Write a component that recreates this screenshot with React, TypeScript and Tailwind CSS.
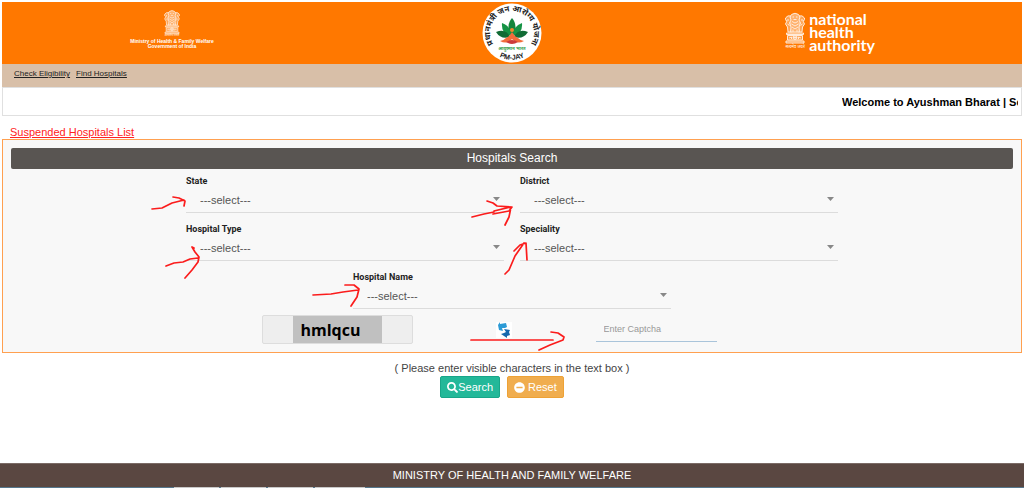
import React from 'react';
import { FaSearch, FaMinusCircle } from 'react-icons/fa';

interface SelectFieldProps {
  id: string;
  label: string;
}

const SelectField: React.FC<SelectFieldProps> = ({ id, label }) => (
  <div className="px-2 h-12">
    <label htmlFor={id} className="block pt-1 text-[9px] leading-4 font-bold font-['Roboto',sans-serif] text-[#222]">
      {label}
    </label>
    <div className="relative">
      <select
        id={id}
        className="block w-full h-6 appearance-none bg-transparent border-b border-[#dcdcdc] pl-3.5 pb-0.5 text-[11px] leading-4 text-[#555] outline-none"
      >
        <option>---select---</option>
      </select>
      <svg className="absolute right-1 top-2 w-[7px] h-1 pointer-events-none" viewBox="0 0 7 4">
        <path d="M0 0h7L3.5 4z" fill="#888" />
      </svg>
    </div>
  </div>
);

// Lion capital of Ashoka
const Emblem: React.FC<{ className: string }> = ({ className }) => (
  <svg className={className} viewBox="2 0 40 62" fill="none" stroke="#fff" strokeWidth="2" opacity="0.85">
    <path d="M15 4q7-5 14 0l3 5-2 6 3 6-3 8 1 10H13l1-10-3-8 3-6-2-6z" fill="#fff" fillOpacity="0.5" />
    <path d="M14 7Q7 5 4 10l-2 4 4 3-3 6 4 6 1 10h7M30 7q7-2 10 3l2 4-4 3 3 6-4 6-1 10h-7" fill="#fff" fillOpacity="0.4" />
    <path d="M17 9h3M24 9h3M19 14h6M16 18l6 3 6-3M15 23l7 4 7-4M16 29l6 4 6-4M18 34v5M26 34v5M8 13v4M36 13v4M7 23l4 3M37 23l-4 3" />
    <path d="M5 41h34v3H5zM7 46h30v9H7zM4 57h36v4H4z" fill="#fff" fillOpacity="0.35" />
    <circle cx="22" cy="50" r="4" />
    <path d="M22 46v8M18 50h8M10 51l5-2v4M34 51l-5-2v4" />
  </svg>
);

const PmjayLogo: React.FC = () => (
  <svg className="w-[60px] h-[60px]" viewBox="0 0 60 60" role="img" aria-label="PM-JAY">
    <defs>
      <path id="ring-top" d="M12.2 42.6A21.8 21.8 0 1 1 47.8 42.6" />
      <path id="ring-bottom" d="M5 40A27 27 0 0 0 55 40" />
    </defs>
    <circle cx="30" cy="30" r="29.5" fill="#fff" />
    <g className="font-['Noto_Sans',sans-serif]" fill="#222" textAnchor="middle">
      <text fontSize="8" fontWeight="700">
        <textPath href="#ring-top" startOffset="50%">प्रधानमंत्री जन आरोग्य योजना</textPath>
      </text>
      <text fontSize="7" fontWeight="700" className="font-['Liberation_Sans',sans-serif]">
        <textPath href="#ring-bottom" startOffset="50%">PM-JAY</textPath>
      </text>
      <text x="30" y="47" fontSize="4.5" fontWeight="700" fill="#35a04a">आयुष्मान भारत</text>
    </g>
    <path d="M30 15q-7 8 0 19q7-11 0-19" fill="#14853b" />
    <path d="M29 33Q19 31 20 20q9 3 9 13M31 33q10-2 9-13-9 3-9 13" fill="#169345" />
    <path d="M28 34q-9 3-14-5 10-4 14 5M32 34q9 3 14-5-10-4-14 5" fill="#116b35" />
    <circle cx="30" cy="27" r="2" fill="#ef8a2b" />
    <path d="M30 29q-2 4-6 6-3 3-6 3 7 4 12-2 5 6 12 2-3 0-6-3-4-2-6-6" fill="#f26b3a" />
    <path d="M24 39q6-4 12 0-6 4-12 0" fill="#cc3b3b" />
  </svg>
);

const RefreshIcon: React.FC = () => (
  <svg className="w-4 h-4 bg-white" viewBox="0 0 16 16">
    <path d="M4 0v2l6-1 1 4-2 1H6l1 3-4-1-1-5z" fill="#2d9bd6" />
    <path d="M8 7l6 1-1 2 1 3-3 1v2l-6-4 3-1 2-1z" fill="#1769ae" />
  </svg>
);

// Pen strokes drawn on top of the search form
const Annotations: React.FC = () => (
  <svg
    className="absolute inset-0 w-full h-full pointer-events-none"
    viewBox="3 140 1018 212"
    fill="none"
    stroke="#fb1c1c"
    strokeWidth="1.7"
    strokeLinecap="round"
    strokeLinejoin="round"
  >
    <path d="M152 209l10-1 6-3 4-2 12-3M173 197l6 1 6 3-1 5" />
    <path d="M166 266l8-3 9-1 7-3 8-1M194 248l-2-1 3 5 4 5-1 5-6 8-7 8" />
    <path d="M472 217l12-3 10-2M494 211l17-4-2 10-4 8M487 201l6 2 4 3 15 1-3 4-16 3" />
    <path d="M505 274l4-4 6-14 9-13M514 251l6-6 6-2 1 17" />
    <path d="M313 295l18-1 12-2 15-2M345 285l9 0 5 4-2 8-6 9" />
    <path d="M471 340H553M551 332l7 1 6 4-1 3-13 5-11 5" />
  </svg>
);

export default function App() {
  return (
    <div className="min-h-screen flex flex-col bg-white font-['Liberation_Sans',Arial,sans-serif] text-[11px] leading-4 text-[#333]">
      <div className="px-0.5 pt-0.5">
        <header className="flex justify-between h-[62px] bg-[#ff7800] text-white">
          <div className="w-1/3 flex flex-col items-center pt-2">
            <Emblem className="w-4 h-6" />
            <span className="text-[3px] leading-[3px] font-['Noto_Sans',sans-serif]">सत्यमेव जयते</span>
            <p className="pt-0.5 text-[5px] leading-[5px] font-bold text-center">
              Ministry of Health &amp; Family Welfare
              <br />
              Government of India
            </p>
          </div>
          <div className="w-1/3 flex justify-center items-center">
            <PmjayLogo />
          </div>
          <div className="w-1/3 flex justify-center pt-2.5 pr-11 gap-1">
            <div className="flex flex-col items-center">
              <Emblem className="w-5 h-8" />
              <span className="text-[4px] leading-[6px] font-['Noto_Sans',sans-serif]">सत्यमेव जयते</span>
            </div>
            <p className="text-[16px] leading-[13px] font-bold font-['Lato',sans-serif]">
              national
              <br />
              health
              <br />
              authority
            </p>
          </div>
        </header>
        <nav className="flex gap-1.5 h-[23px] px-3 pt-0.5 bg-[#d8bfa8] text-[8px] text-[#222] underline">
          <a href="#eligibility">Check Eligibility</a>
          <a href="#hospitals">Find Hospitals</a>
        </nav>
        <div className="flex h-[29px] border border-[#e0e0e0] pr-[3px] items-center">
          <p className="ml-auto w-[176px] overflow-hidden whitespace-nowrap font-bold text-black">
            Welcome to Ayushman Bharat | Search
          </p>
        </div>
        <div className="px-2 pt-2 h-[23px]">
          <a href="#suspended" className="text-[#f22] underline">Suspended Hospitals List</a>
        </div>

        <main className="relative border border-[#ffa050] bg-[#f8f8f8] px-2 py-2">
          <h1 className="h-[21px] rounded-xs bg-[#595552] text-[12px] text-white text-center leading-[21px]">Hospitals Search</h1>
          <form id="hospital-search">
            <div className="w-2/3 mx-auto grid grid-cols-2">
              <SelectField id="state" label="State" />
              <SelectField id="district" label="District" />
              <SelectField id="type" label="Hospital Type" />
              <SelectField id="speciality" label="Speciality" />
            </div>
            <div className="w-1/3 mx-auto">
              <SelectField id="name" label="Hospital Name" />
            </div>
            <div className="w-1/2 mx-auto pt-0.5 grid grid-cols-3">
              <div className="pr-4">
                <div className="flex h-[29px] rounded-xs border border-[#ddd] bg-[#eee] px-[30px]">
                  <span className="flex-1 bg-[#c0c0c0] pl-2 text-[16px] leading-7 font-bold text-black font-['Open_Sans',sans-serif]">
                    hmlqcu
                  </span>
                </div>
              </div>
              <div className="flex justify-center items-center pr-4">
                <button type="button" aria-label="Refresh captcha">
                  <RefreshIcon />
                </button>
              </div>
              <input
                aria-label="Enter Captcha"
                placeholder="Enter Captcha"
                className="w-[121px] h-[27px] px-2 pt-0.5 border-b border-[#a9c4da] bg-transparent text-[9px] placeholder:text-[#999] outline-none"
              />
            </div>
          </form>
          <Annotations />
        </main>
      </div>

      <div className="pt-[7px] text-center">
        <p className="text-[#444]">( Please enter visible characters in the text box )</p>
        <div className="flex justify-center gap-[7px] pr-5 text-white">
          <button
            type="submit"
            form="hospital-search"
            className="flex items-center h-[22px] px-1.5 rounded-xs border border-[#18a689] bg-[#23b899]"
          >
            <FaSearch />
            Search
          </button>
          <button
            type="reset"
            form="hospital-search"
            className="flex items-center gap-[3px] h-[22px] px-1.5 rounded-xs border border-[#eea236] bg-[#f0ad4e]"
          >
            <FaMinusCircle />
            Reset
          </button>
        </div>
      </div>

      <footer className="mt-auto">
        <p className="h-6 border-t border-[#7b6b66] bg-[#5a4741] text-center text-white leading-[22px]">
          MINISTRY OF HEALTH AND FAMILY WELFARE
        </p>
        <div className="h-px bg-[#55778c] flex gap-[2px] pl-[174px]">
          <span className="w-[45px] bg-[#c9c9c9]" />
          <span className="w-[45px] bg-[#c9c9c9]" />
          <span className="w-[45px] bg-[#c9c9c9]" />
          <span className="w-[50px] bg-[#c9c9c9]" />
        </div>
      </footer>
    </div>
  );
}
